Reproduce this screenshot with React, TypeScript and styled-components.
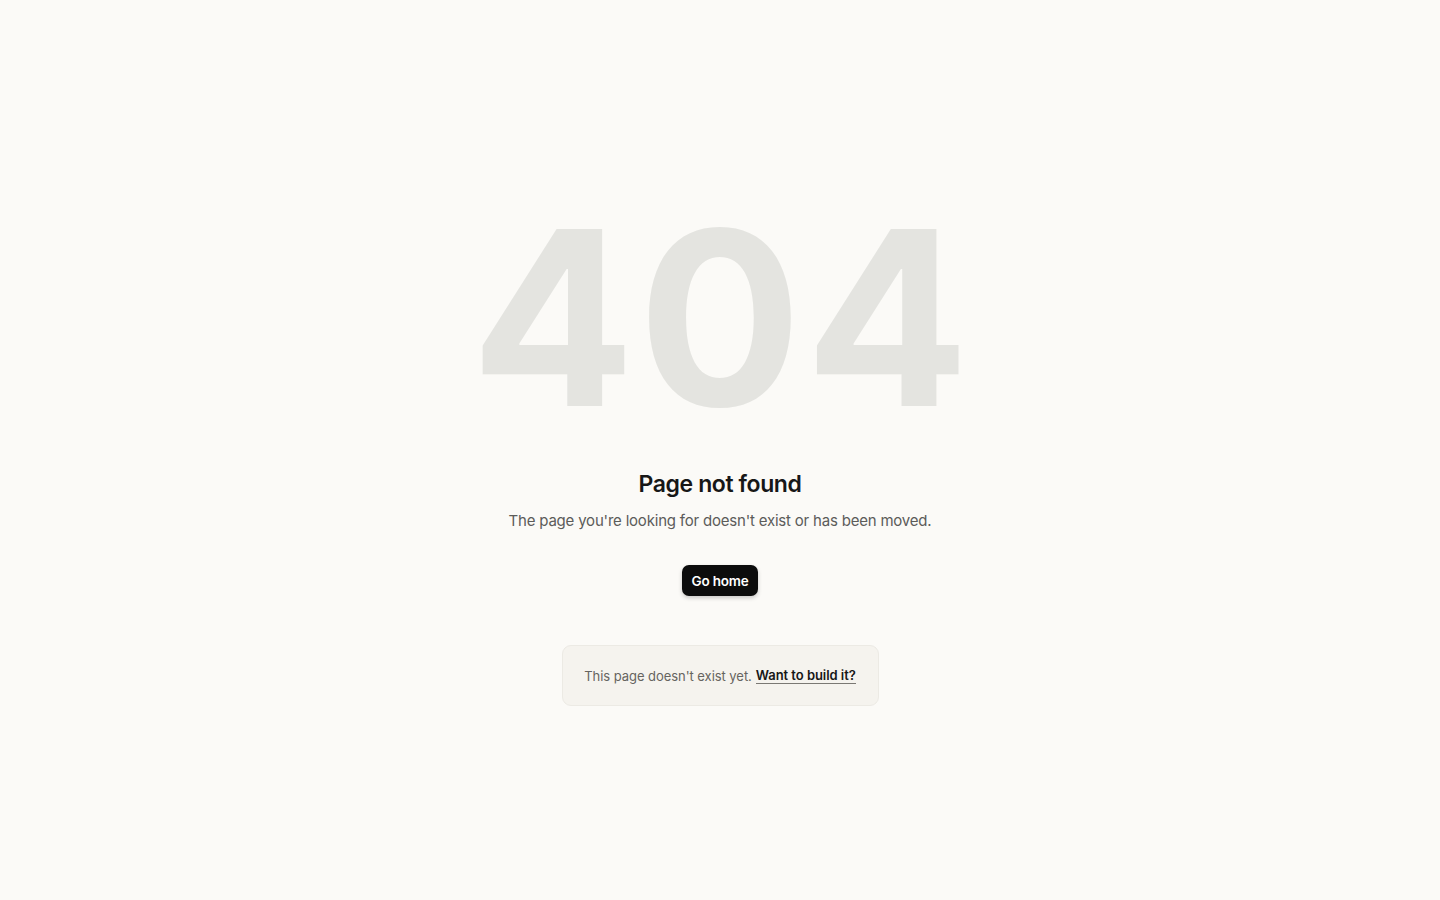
import React from "react";
import styled, { createGlobalStyle } from "styled-components";

const GlobalStyle = createGlobalStyle`
  html, body {
    margin: 0;
    padding: 0;
    background: #fbfaf7;
  }
  body {
    font-family: Inter, "Noto Sans", "Liberation Sans", sans-serif;
    color: #1a1a1a;
    -webkit-font-smoothing: antialiased;
  }
`

const Page = styled.main`
  min-height: 100vh;
  display: flex;
  flex-direction: column;
  align-items: center;
  justify-content: center;
  text-align: center;
  box-sizing: border-box;
  padding-top: 3px;
`

const BigCode = styled.div`
  font-size: 243px;
  font-weight: 700;
  line-height: 1;
  letter-spacing: 3px;
  margin-right: -3px;
  color: #e4e4e0;
  user-select: none;
`

const Title = styled.h1`
  margin: 30px 0 0;
  font-size: 23px;
  font-weight: 600;
  letter-spacing: -0.4px;
  color: #171717;
`

const Subtitle = styled.p`
  margin: 13px 0 0;
  font-size: 15px;
  letter-spacing: -0.2px;
  color: #5c5c5a;
`

const HomeButton = styled.a`
  margin-top: 35px;
  display: inline-flex;
  align-items: center;
  height: 31px;
  padding: 0 10px;
  border-radius: 7px;
  background: #0c0c0c;
  color: #fff;
  font-size: 13.5px;
  font-weight: 600;
  letter-spacing: -0.2px;
  text-decoration: none;
  box-shadow: 0 2px 4px rgba(0, 0, 0, 0.2);
  cursor: pointer;
`

const Notice = styled.div`
  margin-top: 49px;
  width: 317px;
  height: 61px;
  box-sizing: border-box;
  display: flex;
  align-items: center;
  justify-content: center;
  background: #f5f3ee;
  border: 1px solid #eceae4;
  border-radius: 9px;
  font-size: 13px;
  letter-spacing: -0.05px;
  color: #66645f;
`

const BuildLink = styled.a`
  margin-left: 4px;
  color: #171717;
  font-weight: 600;
  text-decoration: none;
  border-bottom: 1.5px solid #7a7873;
  cursor: pointer;
`

export default function App() {
  return (
    <>
      <GlobalStyle />
      <Page>
        <BigCode>404</BigCode>
        <Title>Page not found</Title>
        <Subtitle>The page you're looking for doesn't exist or has been moved.</Subtitle>
        <HomeButton href="#">Go home</HomeButton>
        <Notice>
          This page doesn't exist yet.
          <BuildLink href="#">Want to build it?</BuildLink>
        </Notice>
      </Page>
    </>
  );
}
